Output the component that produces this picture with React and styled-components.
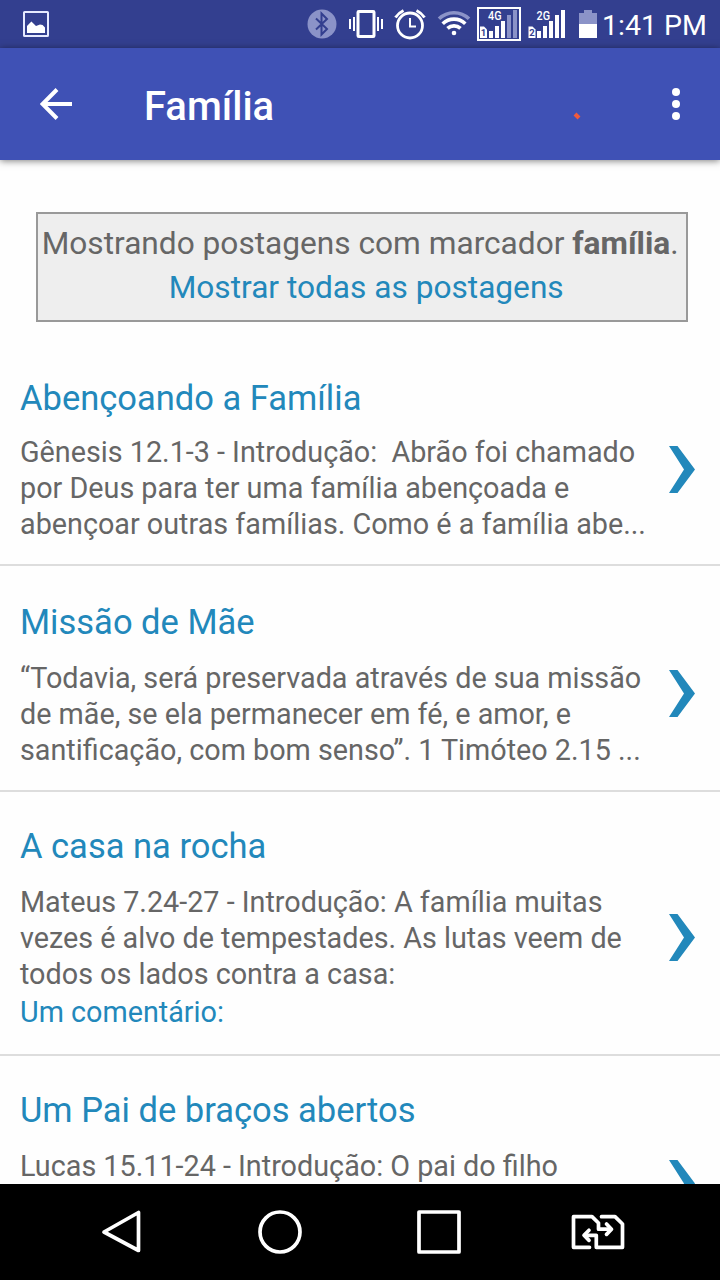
import React from "react";
import styled, { createGlobalStyle } from "styled-components";

const GlobalStyle = createGlobalStyle`
  * { box-sizing: border-box; }
  body { margin: 0; background: #fff; font-family: Roboto, "Liberation Sans", sans-serif; }
  svg { display: block; flex: none; }
`;

const Screen = styled.div`
  display: flex;
  flex-direction: column;
  width: 720px;
  height: 1280px;
  overflow: hidden;
  background: #fefefe;
`;

const StatusBar = styled.header`
  display: flex;
  align-items: center;
  flex: none;
  height: 48px;
  padding: 0 14px 0 22px;
  background: #333f8f;
  color: #fff;
`;

const StatusIcons = styled.div`
  display: flex;
  align-items: center;
  margin-left: auto;
`;

const StatusItem = styled.div`
  flex: none;
  margin-right: ${(p) => p.$gap}px;
`;

const Clock = styled.time`
  width: 104px;
  margin-left: 5px;
  font-size: 28.5px;
  line-height: 48px;
  white-space: nowrap;
  padding-top: 3px;
`;

const AppBar = styled.div`
  display: flex;
  align-items: center;
  flex: none;
  position: relative;
  z-index: 1;
  height: 112px;
  padding: 0 40px;
  background: #3f51b5;
  color: #fff;
  box-shadow: 0 1px 7px rgba(0, 0, 0, 0.5);
`;

const BarTitle = styled.h1`
  flex: 1;
  margin: 0;
  padding: 5px 0 0 72px;
  font-size: 40px;
  font-weight: 500;
  line-height: 48px;
`;

const Spark = styled.svg`
  margin: 24px 91px 0 0;
`;

const Content = styled.main`
  display: flex;
  flex-direction: column;
  flex: 1;
  min-height: 0;
  overflow: hidden;
`;

const Notice = styled.section`
  flex: none;
  height: 110px;
  margin: 52px 32px 0 36px;
  padding: 8px 0 0 3.7px;
  border: 2px solid #999;
  background: #eee;
  color: #666;
  font-size: 31.65px;
  line-height: 44px;
  white-space: nowrap;
`;

const NoticeLink = styled.a`
  display: block;
  padding-left: 127px;
  color: #2288bb;
`;

const PostList = styled.div`
  flex: none;
  padding-top: 18px;
`;

const PostRow = styled.article`
  display: flex;
  align-items: flex-start;
  height: ${(p) => p.$height}px;
  padding: ${(p) => p.$top}px 25px 0 20px;
  border-bottom: 2px solid #ddd;
`;

const PostText = styled.div`
  flex: 1;
  min-width: 0;
  white-space: pre;
`;

const PostTitle = styled.h2`
  margin: 0 0 ${(p) => p.$gap}px;
  color: #2288bb;
  font-size: 34.5px;
  font-weight: 400;
  line-height: 44px;
`;

const Snippet = styled.p`
  margin: 0;
  color: #666;
  font-size: 28.76px;
  line-height: 36px;
`;

const Comments = styled.a`
  display: block;
  margin-top: 2px;
  color: #2288bb;
  font-size: 28.76px;
  line-height: 36px;
`;

const ArrowSlot = styled.div`
  flex: none;
  padding-top: ${(p) => p.$top}px;
`;

const NavBar = styled.nav`
  display: flex;
  align-items: center;
  flex: none;
  height: 96px;
  padding-left: 100px;
  background: #000;
`;

const NavButton = styled.div`
  flex: none;
  width: ${(p) => p.$width}px;
`;

const posts = [
  {
    title: "Abençoando a Família",
    lines: [
      "Gênesis 12.1-3 - Introdução:  Abrão foi chamado",
      "por Deus para ter uma família abençoada e",
      "abençoar outras famílias. Como é a família abe...",
    ],
    height: 226, top: 36, gap: 14, arrow: 70,
  },
  {
    title: "Missão de Mãe",
    lines: [
      "“Todavia, será preservada através de sua missão",
      "de mãe, se ela permanecer em fé, e amor, e",
      "santificação, com bom senso”. 1 Timóteo 2.15 ...",
    ],
    height: 226, top: 34, gap: 16, arrow: 70,
  },
  {
    title: "A casa na rocha",
    lines: [
      "Mateus 7.24-27 - Introdução: A família muitas",
      "vezes é alvo de tempestades. As lutas veem de",
      "todos os lados contra a casa:",
    ],
    comment: "Um comentário:",
    height: 264, top: 32, gap: 16, arrow: 90,
  },
  {
    title: "Um Pai de braços abertos",
    lines: ["Lucas 15.11-24 - Introdução: O pai do filho"],
    height: 226, top: 32, gap: 16, arrow: 72,
  },
];

const PictureIcon = () => (
  <svg width="28" height="28" viewBox="0 0 28 28">
    <rect x="2" y="2" width="24" height="24" rx="0.6" fill="none" stroke="#e6eaff" strokeWidth="2" />
    <path d="M5 23V16l4.4-4.500 4.600 4.500 4-1.600 2.600 0.600 2.400 2.500V23z" fill="#fff" />
  </svg>
);

const BluetoothIcon = () => (
  <svg width="30" height="48" viewBox="0 0 30 48">
    <circle cx="15" cy="24" r="14.5" fill="#8b93c8" />
    <path d="M9 18.500L20 29l-5.500 5.500V13.500L20 19 9 29.500" fill="none" stroke="#333f8f" strokeWidth="2" />
  </svg>
);

const VibrateIcon = () => (
  <svg width="36" height="48" viewBox="0 0 36 48">
    <rect x="10" y="11.5" width="16" height="25" rx="0.8" fill="none" stroke="#fff" strokeWidth="3" />
    <path d="M2 19v10M6 17v14M30 17v14M34 19v10" stroke="#fff" strokeWidth="2" />
  </svg>
);

const AlarmIcon = () => (
  <svg width="34" height="48" viewBox="0 0 34 48">
    <circle cx="17" cy="25.5" r="12.5" fill="none" stroke="#fff" strokeWidth="2.8" />
    <path d="M17 18v8.500h6" fill="none" stroke="#fff" strokeWidth="2" />
    <path d="M2.500 17.500q3-4.500 8-7M31.500 17.500q-3-4.500-8-7" fill="none" stroke="#fff" strokeWidth="3" />
  </svg>
);

const WifiIcon = () => (
  <svg width="34" height="48" viewBox="0 0 34 48">
    <path d="M2 18.800a21.500 21.500 0 0 1 30 0" fill="none" stroke="#8b93c8" strokeWidth="3.600" />
    <path d="M5.700 23.800a16 16 0 0 1 22.600 0M10.500 28.400a9.500 9.500 0 0 1 13 0" fill="none" stroke="#fff" strokeWidth="3.600" />
    <circle cx="17" cy="33" r="2.300" fill="#fff" />
  </svg>
);

const SimBadge = ({ label, x }) => (
  <>
    <path d={`M${x} 26.500h4l3 3v8.500h-7z`} fill="#fff" />
    <text x={x + 0.800} y="36.300" fontSize="9.500" fontWeight="700" fill="#333f8f">{label}</text>
  </>
);

const SignalOneIcon = () => (
  <svg width="44" height="48" viewBox="0 0 44 48">
    <rect x="1" y="8" width="42" height="32" fill="none" stroke="#fff" strokeWidth="2" />
    <text x="11" y="20" fontSize="12" fontWeight="500" fill="#fff" textLength="13.500" lengthAdjust="spacingAndGlyphs">4G</text>
    <SimBadge label="1" x={3} />
    <path d="M12 31h4v7h-4zM18 26h4v12h-4zM24 21h4v17h-4z" fill="#fff" />
    <path d="M30 15h4v23h-4zM36 10h4v28h-4z" fill="#8b93c8" />
  </svg>
);

const SignalTwoIcon = () => (
  <svg width="38" height="48" viewBox="0 0 38 48">
    <text x="8.500" y="20" fontSize="12" fontWeight="500" fill="#fff" textLength="13.500" lengthAdjust="spacingAndGlyphs">2G</text>
    <SimBadge label="2" x={0.500} />
    <path d="M9 31h4v7H9zM15 26h4v12h-4zM21 21h4v17h-4zM27 15h4v23h-4zM33 10h4v28h-4z" fill="#fff" />
  </svg>
);

const BatteryIcon = () => (
  <svg width="18" height="48" viewBox="0 0 18 48">
    <path d="M0 13h5v-3h8v3h5v11H0z" fill="#8b93c8" />
    <path d="M0 24h18v14H0z" fill="#fff" />
  </svg>
);

const BackArrow = () => (
  <svg width="32" height="32" viewBox="0 0 32 32">
    <path d="M32 16H3.500M17 1.500L2.600 16 17 30.500" fill="none" stroke="#fff" strokeWidth="4" />
  </svg>
);

const MoreIcon = () => (
  <svg width="8" height="32" viewBox="0 0 8 32">
    <circle cx="4" cy="4" r="4" fill="#fff" />
    <circle cx="4" cy="16" r="4" fill="#fff" />
    <circle cx="4" cy="28" r="4" fill="#fff" />
  </svg>
);

const Chevron = () => (
  <svg width="26" height="47" viewBox="0 0 26 47">
    <path d="M0 0h8.500L26 23.500 8.500 47H0l15-23.500z" fill="#2288bb" />
  </svg>
);

const SimSwapIcon = () => (
  <svg width="54" height="36" viewBox="0 0 54 36" fill="none" stroke="#fff" strokeWidth="3.700" strokeLinejoin="round" strokeLinecap="round">
    <path d="M18.500 33.300H2.500V2.700h18.500l6.500 6.300v6.200H39" />
    <path d="M30.500 2.700H44l7.500 7.300V33.300H25.300V21.300H14" />
    <path d="M35.500 10l5 5.200-5 5.200M18 16.200l-5 5.100 5 5.100" />
  </svg>
);

export default function App() {
  return (
    <Screen>
      <GlobalStyle />
      <StatusBar>
        <PictureIcon />
        <StatusIcons>
          <StatusItem $gap={11}><BluetoothIcon /></StatusItem>
          <StatusItem $gap={9}><VibrateIcon /></StatusItem>
          <StatusItem $gap={10}><AlarmIcon /></StatusItem>
          <StatusItem $gap={6}><WifiIcon /></StatusItem>
          <StatusItem $gap={7}><SignalOneIcon /></StatusItem>
          <StatusItem $gap={13}><SignalTwoIcon /></StatusItem>
          <StatusItem $gap={0}><BatteryIcon /></StatusItem>
        </StatusIcons>
        <Clock>1:41 PM</Clock>
      </StatusBar>
      <AppBar>
        <BackArrow />
        <BarTitle>Família</BarTitle>
        <Spark width="8" height="8" viewBox="0 0 8 8">
          <path d="M2 2l4 4" stroke="#f15a3c" strokeWidth="4" />
        </Spark>
        <MoreIcon />
      </AppBar>
      <Content>
        <Notice>
          Mostrando postagens com marcador <b>família</b>.
          <NoticeLink>Mostrar todas as postagens</NoticeLink>
        </Notice>
        <PostList>
          {posts.map((post) => (
            <PostRow key={post.title} $height={post.height} $top={post.top}>
              <PostText>
                <PostTitle $gap={post.gap}>{post.title}</PostTitle>
                {post.lines.map((line) => (
                  <Snippet key={line}>{line}</Snippet>
                ))}
                {post.comment && <Comments>{post.comment}</Comments>}
              </PostText>
              <ArrowSlot $top={post.arrow}>
                <Chevron />
              </ArrowSlot>
            </PostRow>
          ))}
        </PostList>
      </Content>
      <NavBar>
        <NavButton $width={156}>
          <svg width="44" height="48" viewBox="0 0 44 48">
            <path d="M38.500 4.500v38L4 24z" fill="none" stroke="#fff" strokeWidth="3.700" strokeLinejoin="round" />
          </svg>
        </NavButton>
        <NavButton $width={160}>
          <svg width="48" height="48" viewBox="0 0 48 48">
            <circle cx="24" cy="24" r="20" fill="none" stroke="#fff" strokeWidth="3.700" />
          </svg>
        </NavButton>
        <NavButton $width={155}>
          <svg width="48" height="48" viewBox="0 0 48 48">
            <rect x="3" y="4" width="40" height="40" fill="none" stroke="#fff" strokeWidth="3.700" strokeLinejoin="round" />
          </svg>
        </NavButton>
        <SimSwapIcon />
      </NavBar>
    </Screen>
  );
}
